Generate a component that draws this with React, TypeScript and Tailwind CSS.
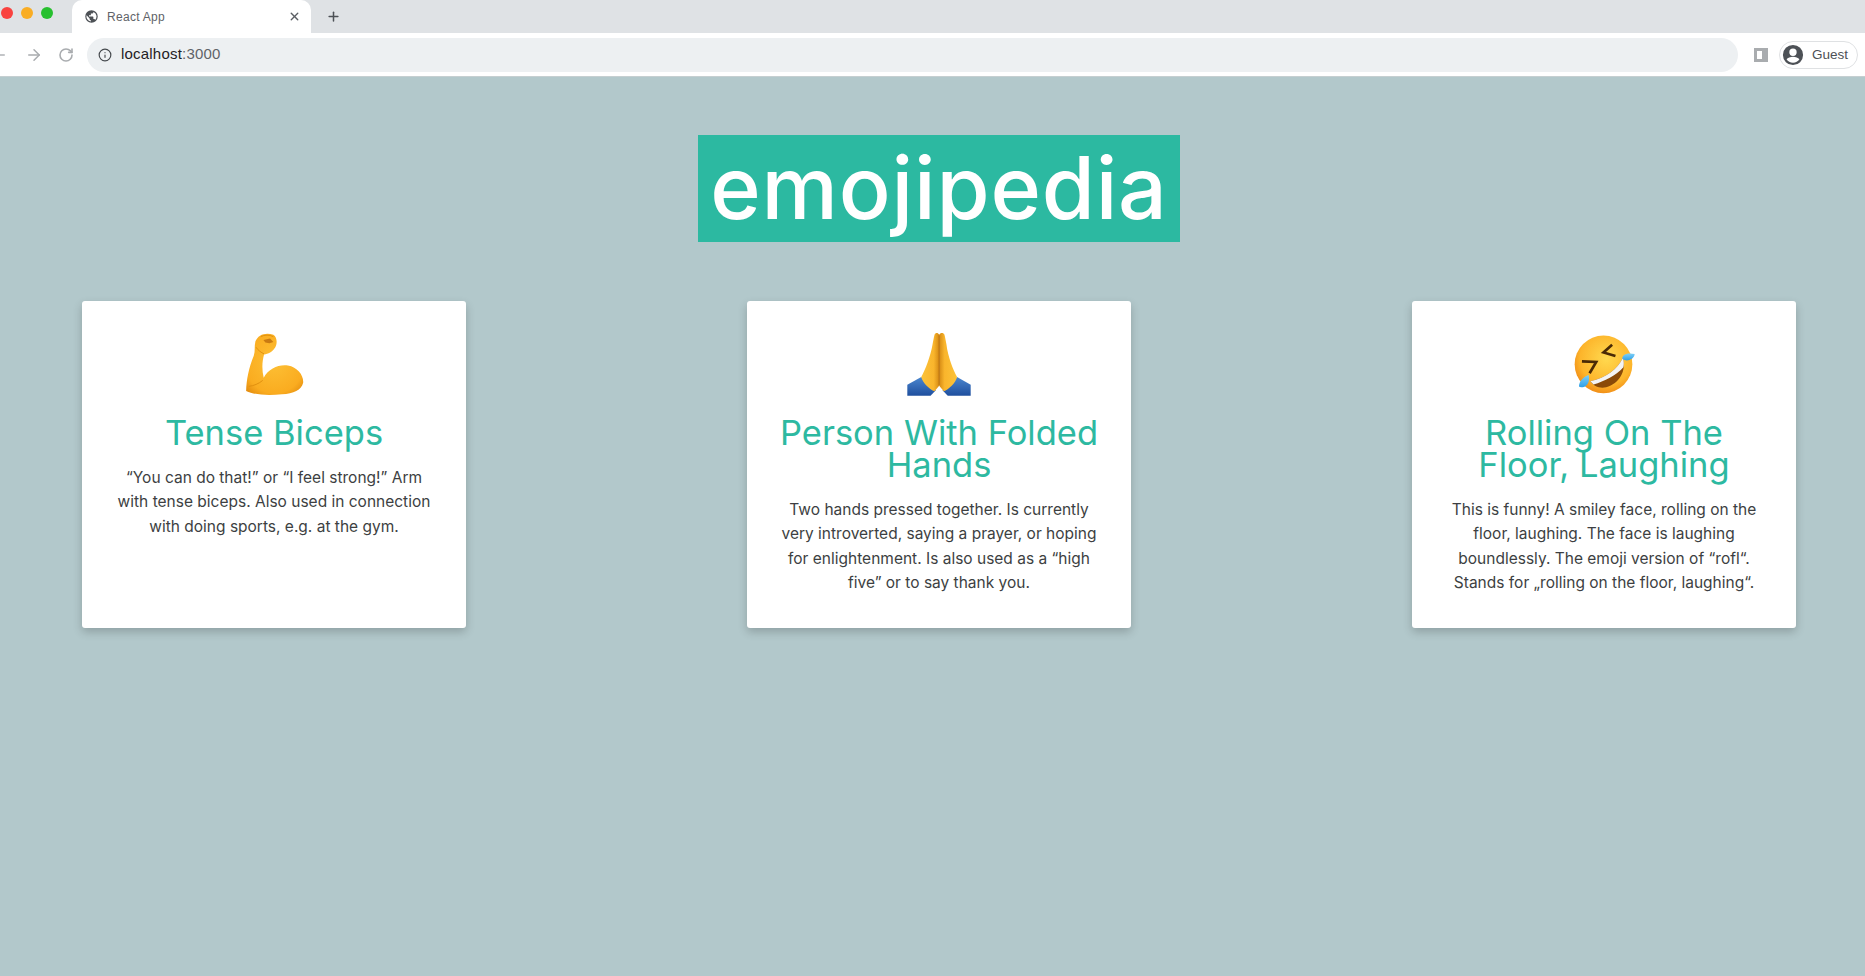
import React from 'react';
import { ArrowLeft, ArrowRight, Info, Plus, RotateCw, X } from 'lucide-react';

const Biceps = () => (
    <svg viewBox="130 30 195 205" className="w-[65px] h-[68px]">
        <defs>
            <radialGradient id="arm" cx="0.5" cy="0.45" r="0.7">
                <stop offset="0" stopColor="#fdc035" />
                <stop offset="0.75" stopColor="#faac20" />
                <stop offset="1" stopColor="#e28a0d" />
            </radialGradient>
        </defs>
        <path
            d="M142 214 C143 180 150 145 165 108 C170 94 166 80 170 64 C178 44 200 36 224 44 C236 52 236 70 230 82 C222 96 208 102 196 104 C190 125 189 150 195 174 C210 146 240 133 268 137 C296 142 315 165 314 188 C309 212 285 221 250 224 C210 227 170 227 142 214 Z"
            fill="url(#arm)"
        />
        <path d="M192 182 C180 192 165 198 150 200" stroke="#e0900f" strokeWidth="3" fill="none" />
        <path d="M194 60 L214 56 L224 66 L212 70 L200 68 Z" fill="#c97a12" />
        <path d="M186 50 C198 44 212 44 224 50 M172 82 C178 92 188 98 196 102" stroke="#e0900f" strokeWidth="3" fill="none" />
    </svg>
);

const FoldedHands = () => (
    <svg viewBox="75 30 205 205" className="w-[68px] h-[68px]">
        <defs>
            <linearGradient id="sleeve" x1="0" y1="0" x2="0" y2="1">
                <stop offset="0" stopColor="#4a86cf" />
                <stop offset="1" stopColor="#1f4f9e" />
            </linearGradient>
            <linearGradient id="palmL" x1="0" y1="0" x2="1" y2="0">
                <stop offset="0" stopColor="#fcc33a" />
                <stop offset="0.7" stopColor="#f9b52c" />
                <stop offset="1" stopColor="#d58a14" />
            </linearGradient>
            <linearGradient id="palmR" x1="1" y1="0" x2="0" y2="0">
                <stop offset="0" stopColor="#fcc33a" />
                <stop offset="0.7" stopColor="#f9b52c" />
                <stop offset="1" stopColor="#d58a14" />
            </linearGradient>
        </defs>
        <path d="M82 228 L82 195 L124 172 L168 212 L152 228 Z" fill="url(#sleeve)" />
        <path d="M273 228 L273 195 L232 172 L188 212 L204 228 Z" fill="url(#sleeve)" />
        <path
            d="M178 198 L178 44 C174 36 166 38 164 44 C162 52 160 62 158 74 C152 110 136 150 124 172 C128 190 150 210 164 215 L178 198 Z"
            fill="url(#palmL)"
        />
        <path
            d="M178 198 L178 44 C182 36 192 38 194 44 C196 52 198 62 200 74 C204 110 220 150 232 172 C228 190 206 210 192 215 L178 198 Z"
            fill="url(#palmR)"
        />
        <path d="M178 46 L178 196" stroke="#b8700f" strokeWidth="3" />
    </svg>
);

const Rofl = () => (
    <svg viewBox="70 40 190 180" className="w-[63px] h-[60px]">
        <defs>
            <radialGradient id="face" cx="0.55" cy="0.4" r="0.65">
                <stop offset="0" stopColor="#ffd94f" />
                <stop offset="0.7" stopColor="#fdb52b" />
                <stop offset="1" stopColor="#ee8412" />
            </radialGradient>
            <linearGradient id="tear" x1="0" y1="0" x2="0" y2="1">
                <stop offset="0" stopColor="#7fd0f7" />
                <stop offset="1" stopColor="#2f9fe6" />
            </linearGradient>
        </defs>
        <circle cx="162" cy="131" r="87" fill="url(#face)" />
        <path d="M122 182 C170 172 205 145 220 112 C232 150 210 190 170 200 C150 205 132 196 122 182 Z" fill="#8a4a08" />
        <path d="M122 182 C170 172 205 145 220 112 C224 122 224 130 222 140 C200 165 165 182 132 192 Z" fill="#f4f4f4" />
        <path d="M188 72 L162 95 L198 106" stroke="#4a2a06" strokeWidth="8" fill="none" />
        <path d="M97 122 L140 124 L120 158" stroke="#4a2a06" strokeWidth="8" fill="none" />
        <path d="M256 100 C254 116 234 124 220 116 C214 104 232 94 256 100 Z" fill="url(#tear)" />
        <path d="M88 198 C88 182 102 168 117 163 C122 180 114 198 100 200 C94 201 90 200 88 198 Z" fill="url(#tear)" />
    </svg>
);

const cards = [
    {
        icon: <Biceps />,
        name: 'Tense Biceps',
        text: '“You can do that!” or “I feel strong!” Arm with tense biceps. Also used in connection with doing sports, e.g. at the gym.',
    },
    {
        icon: <FoldedHands />,
        name: 'Person With Folded Hands',
        text: 'Two hands pressed together. Is currently very introverted, saying a prayer, or hoping for enlightenment. Is also used as a “high five” or to say thank you.',
    },
    {
        icon: <Rofl />,
        name: 'Rolling On The Floor, Laughing',
        text: 'This is funny! A smiley face, rolling on the floor, laughing. The face is laughing boundlessly. The emoji version of “rofl“. Stands for „rolling on the floor, laughing“.',
    },
];

const BrowserBar = () => (
    <div className="font-['Liberation_Sans',sans-serif]">
        <div className="h-[33px] bg-[#dfe2e5] flex items-center">
            <div className="flex gap-[8px] w-[72px] shrink-0 pl-px -mt-[7px]">
                <span className="w-[12px] h-[12px] rounded-full bg-[#f9423f]" />
                <span className="w-[12px] h-[12px] rounded-full bg-[#f9ad24]" />
                <span className="w-[12px] h-[12px] rounded-full bg-[#27c02f]" />
            </div>
            <div className="w-[239px] h-[33px] bg-white rounded-t-[10px] flex items-center pl-[12px] pr-[10px] self-end">
                <svg viewBox="0 0 24 24" className="w-[15px] h-[15px] mr-[8px]">
                    <path
                        fill="#4d5156"
                        d="M12 2a10 10 0 1 0 0 20 10 10 0 0 0 0-20Zm-1 17.9A8 8 0 0 1 4.2 10L9 15v1a2 2 0 0 0 2 2v1.9Zm6.9-2.5A2 2 0 0 0 16 16h-1v-3a1 1 0 0 0-1-1H8v-2h2a1 1 0 0 0 1-1V7h2a2 2 0 0 0 2-2v-.4a8 8 0 0 1 2.9 12.8Z"
                    />
                </svg>
                <span className="text-[12px] text-[#5f6368] tracking-[0.3px] flex-1">React App</span>
                <X className="w-[13px] h-[13px] text-[#5a5e63]" strokeWidth={2.5} />
            </div>
            <Plus className="w-[15px] h-[15px] ml-[15px] text-[#4d5156]" strokeWidth={2.4} />
        </div>
        <div className="h-[44px] bg-white border-b border-[#c5cfd1] flex items-center">
            <ArrowLeft className="w-[18px] h-[18px] -ml-[10px] text-[#b0b3b6]" strokeWidth={2} />
            <ArrowRight className="w-[18px] h-[18px] ml-[17px] text-[#a9acaf]" strokeWidth={2} />
            <RotateCw className="w-[16px] h-[16px] ml-[15px] text-[#a9acaf]" strokeWidth={2.4} />
            <div className="ml-[13px] w-[1651px] h-[34px] rounded-full bg-[#edf0f2] flex items-center pl-[11px]">
                <Info className="w-[14px] h-[14px] text-[#45494d]" strokeWidth={2} />
                <span className="ml-[9px] text-[15px] tracking-[0.2px] text-[#1f2124]">
                    localhost<span className="text-[#5f6368]">:3000</span>
                </span>
            </div>
            <div className="ml-[16px] w-[14px] h-[14px] border-[3px] border-r-[6px] border-[#a9acaf]" />
            <div className="ml-[11px] w-[79px] h-[28px] rounded-full border border-[#dfe1e3] flex items-center pl-[2px]">
                <svg viewBox="0 0 24 24" className="w-[22px] h-[22px]">
                    <path
                        fill="#4d5156"
                        d="M12 1a11 11 0 1 0 0 22 11 11 0 0 0 0-22Zm0 4a4 4 0 1 1 0 8 4 4 0 0 1 0-8Zm0 15.5c-3 0-5.6-1.5-7-3.8 1.2-1.6 4.2-2.7 7-2.7s5.8 1.1 7 2.7a8.3 8.3 0 0 1-7 3.8Z"
                    />
                </svg>
                <span className="ml-[8px] mt-[2px] text-[13.5px] text-[#4d5156]">Guest</span>
            </div>
        </div>
    </div>
);

export default function App() {
    return (
        <div className="h-[976px] overflow-hidden bg-[#b2c8cb] font-['Inter',sans-serif]">
            <BrowserBar />
            <div className="flex justify-center pt-[58px] pl-[13px]">
                <h1 className="w-[482px] h-[107px] bg-[#2cb9a1] text-white text-[86px] leading-[107px] tracking-[0.8px] text-center font-medium">
                    emojipedia
                </h1>
            </div>
            <div className="flex justify-between pl-[82px] pr-[69px] mt-[59px]">
                {cards.map(card => (
                    <div
                        key={card.name}
                        className="w-[384px] h-[327px] bg-white rounded-[3px] shadow-[0_4px_10px_rgba(0,0,0,0.2)] text-center px-[30px] pt-[30px]"
                    >
                        <div className="h-[66px] flex justify-center items-center">{card.icon}</div>
                        <h2 className="mt-[20px] text-[34.5px] leading-[32px] text-[#2db9a1] font-normal">{card.name}</h2>
                        <p className="mt-[17px] text-[15.5px] leading-[24.4px] text-[#3d3f42]">{card.text}</p>
                    </div>
                ))}
            </div>
        </div>
    );
}
